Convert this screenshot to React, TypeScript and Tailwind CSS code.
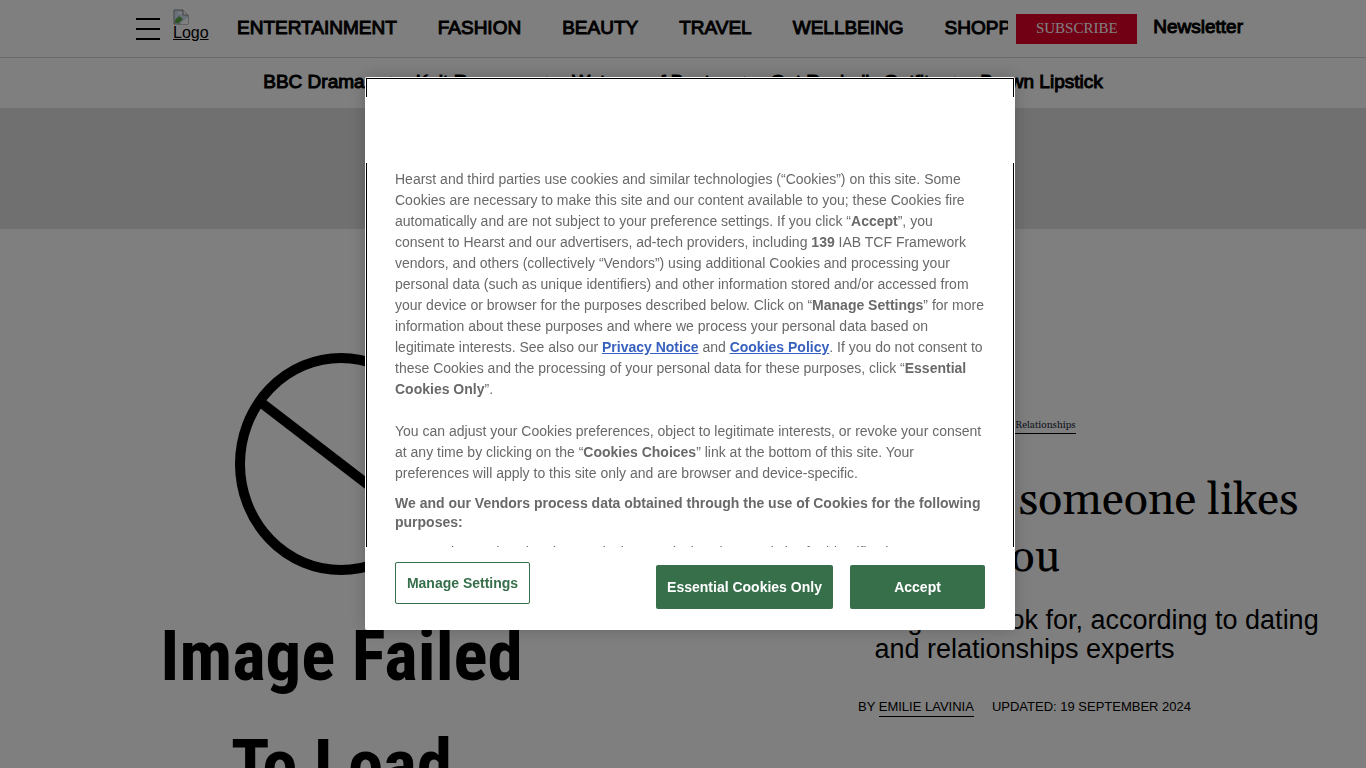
import React from 'react';

const sections = ['ENTERTAINMENT', 'FASHION', 'BEAUTY', 'TRAVEL', 'WELLBEING', 'SHOPPING'];

const trending = [
  'BBC Drama',
  'Knit Romper',
  'Waterproof Boots',
  "Get Rachel's Outfit",
  'Brown Lipstick',
];

const LogoPlaceholder = () => (
  <svg width="16" height="16" viewBox="0 0 16 16" aria-hidden="true">
    <path d="M1 1h9l5 5v9H1z" fill="#d5e0f5" stroke="#8a8a8a" />
    <path d="M10 1v5h5" fill="#fff" stroke="#8a8a8a" />
    <path d="M2 14v-3l4-4 4 3-4 4z" fill="#5aa845" />
    <path d="M5 5a2 2 0 0 1 4 0z" fill="#fff" />
    <path d="M7 15l8-7v7z" fill="#fff" />
  </svg>
);

const Header = () => (
  <header className="shadow-sm">
    <div className="flex h-[58px] items-center justify-center border-b border-gray-300">
      <div className="flex w-full max-w-[1120px] items-center pl-[13px]">
        <button aria-label="Open menu" className="flex w-6 shrink-0 flex-col gap-2">
          <span className="h-[2px] w-full bg-black" />
          <span className="h-[2px] w-full bg-black" />
          <span className="h-[2px] w-full bg-black" />
        </button>
        <a href="#home" className="ml-[13px] w-9 shrink-0 pb-2 text-base leading-4 underline">
          <LogoPlaceholder />
          Logo
        </a>
        <nav className="ml-7 flex min-w-0 flex-1 gap-[41px] overflow-hidden pb-[2px] whitespace-nowrap text-[19px] leading-6 [-webkit-text-stroke:1px]">
          {sections.map((name) => (
            <a key={name} href="#section">
              {name}
            </a>
          ))}
        </nav>
        <a
          href="#subscribe"
          className="ml-2 w-[121px] shrink-0 bg-[#e4002b] pb-[2px] text-center font-['Liberation_Serif',serif] text-[15px] leading-7 text-white"
        >
          SUBSCRIBE
        </a>
        <a href="#newsletter" className="ml-4 shrink-0 pb-1 text-[19px] leading-6 [-webkit-text-stroke:1px]">
          Newsletter
        </a>
      </div>
    </div>
    <nav className="flex h-[50px] items-center justify-center pb-[2px] whitespace-nowrap text-[19px] [-webkit-text-stroke:1px]">
      {trending.map((name, i) => (
        <React.Fragment key={name}>
          {i > 0 && <span className="mx-[25px] h-3 w-px bg-gray-400" />}
          <a href="#trending">{name}</a>
        </React.Fragment>
      ))}
    </nav>
  </header>
);

const FailedImage = () => (
  <div className="flex flex-1 flex-col items-center pt-[122px]">
    <svg width="214" height="226" viewBox="0 0 214 226" fill="none" stroke="#000" strokeWidth="10">
      <ellipse cx="106" cy="113" rx="101" ry="106" />
      <path d="M24 50L188 176" />
    </svg>
    <p className="pt-6 text-center font-['Roboto_Condensed','Liberation_Sans_Narrow',Roboto,sans-serif] text-[71px] leading-[109px] font-bold">
      Image Failed
      <br />
      To Load
    </p>
  </div>
);

const Article = () => (
  <article className="flex flex-1 flex-col items-center pt-[188px] text-center">
    <a
      href="#relationships"
      className="border-b border-black font-['Gelasio','Liberation_Serif',serif] text-[10px] leading-4 text-gray-800"
    >
      Dating &amp; Relationships
    </a>
    <h1 className="mt-[38px] font-['Gelasio','Liberation_Serif',serif] text-[45px] leading-[57px]">
      How to tell if someone likes
      <br />
      you
    </h1>
    <h2 className="mt-5 text-[27px] leading-[29px]">
      Here are the signs to look for, according to dating
      <br />
      and relationships experts
    </h2>
    <div className="mt-[34px] flex gap-[18px] self-start pl-[175px] text-[13px] leading-[18px]">
      <span>
        BY{' '}
        <a href="#author" className="inline-block border-b border-black">
          EMILIE LAVINIA
        </a>
      </span>
      <time>UPDATED: 19 SEPTEMBER 2024</time>
    </div>
  </article>
);

const CookieDialog = () => (
  <div
    role="dialog"
    aria-modal="true"
    aria-label="Cookie consent"
    className="flex w-[650px] flex-col rounded-xs bg-white p-px text-[14px] text-[#696969] shadow-[0_0_18px_rgba(0,0,0,0.2)]"
  >
    <div className="h-[19px] border-x border-t border-black" />
    <div className="h-[66px]" />
    <div className="h-96 overflow-hidden border-x border-black px-7 pt-[6px]">
      <p className="leading-[21px]">
        Hearst and third parties use cookies and similar technologies (“Cookies”) on this site. Some
        Cookies are necessary to make this site and our content available to you; these Cookies fire
        automatically and are not subject to your preference settings. If you click “<b>Accept</b>”, you
        consent to Hearst and our advertisers, ad-tech providers, including <b>139</b> IAB TCF Framework
        vendors, and others (collectively “Vendors”) using additional Cookies and processing your
        personal data (such as unique identifiers) and other information stored and/or accessed from
        your device or browser for the purposes described below. Click on “<b>Manage Settings</b>” for
        more information about these purposes and where we process your personal data based on
        legitimate interests. See also our{' '}
        <a href="#privacy" className="font-bold text-[#3860be] underline">
          Privacy Notice
        </a>{' '}
        and{' '}
        <a href="#cookies" className="font-bold text-[#3860be] underline">
          Cookies Policy
        </a>
        . If you do not consent to these Cookies and the processing of your personal data for these
        purposes, click “<b>Essential Cookies Only</b>”.
      </p>
      <p className="mt-[21px] leading-[21px]">
        You can adjust your Cookies preferences, object to legitimate interests, or revoke your consent
        at any time by clicking on the “<b>Cookies Choices</b>” link at the bottom of this site. Your
        preferences will apply to this site only and are browser and device-specific.
      </p>
      <h3 className="mt-[10px] leading-[19px] font-bold">
        We and our Vendors process data obtained through the use of Cookies for the following purposes:
      </h3>
      <p className="mt-[10px] leading-[21px]">
        Use precise geolocation data. Actively scan device characteristics for identification. Store
      </p>
    </div>
    <div className="flex items-start justify-between px-[29px] pt-[15px] pb-5 font-bold">
      <button className="h-[42px] w-[135px] rounded-xs border border-[#376f4b] text-[#376f4b]">
        Manage Settings
      </button>
      <div className="mt-[3px] flex gap-[17px] text-white">
        <button className="h-11 w-[177px] rounded-xs bg-[#376f4b]">Essential Cookies Only</button>
        <button className="h-11 w-[135px] rounded-xs bg-[#376f4b]">Accept</button>
      </div>
    </div>
  </div>
);

const App = () => {
  return (
    <div className="h-screen overflow-hidden bg-white font-['Liberation_Sans',Arial,sans-serif] text-black">
      <Header />
      <div className="h-[121px] bg-[#e0e0e0]" />
      <main className="flex">
        <FailedImage />
        <Article />
      </main>
      <div className="fixed inset-0 flex items-start justify-center bg-black/50 pt-[77px] pl-[14px]">
        <CookieDialog />
      </div>
    </div>
  );
};

export default App;
